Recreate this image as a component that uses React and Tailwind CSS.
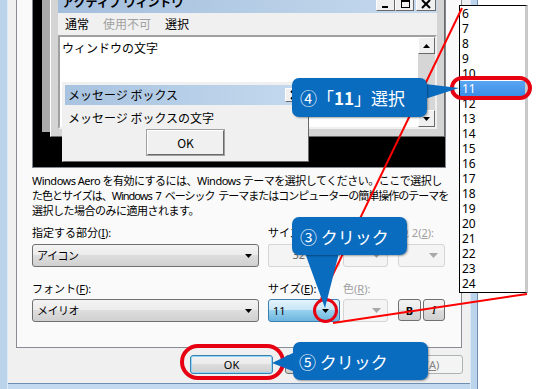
const UI = "font-['Noto_Sans','Noto_Sans_CJK_JP',sans-serif]";

function Tri({ w = 7, h = 4, color = "#000" }) {
  return (
    <svg width={w} height={h} viewBox={`0 0 ${w} ${h}`} className="block shrink-0">
      <path d={`M0 0H${w}L${w / 2} ${h}Z`} fill={color} />
    </svg>
  );
}

function Combo({ className, text, disabled }) {
  return (
    <div
      className={`h-[23px] flex items-center rounded-[3px] border pl-[4px] pr-[6px] ${
        disabled
          ? "border-[#d5d5d5] bg-[#f4f4f4]"
          : "border-[#707070] bg-[linear-gradient(#f3f3f3,#ebebeb_50%,#dddddd_50%,#d0d0d0)]"
      } ${className}`}
    >
      <span className="flex-1 text-[11px] leading-none tracking-[-0.5px]">{text}</span>
      {disabled ? <Tri w={9} h={5} color="#a8a8a8" /> : <Tri />}
    </div>
  );
}

function WinBtn({ children, variant }) {
  const look =
    variant === "default"
      ? "border-[#3c7fb1] shadow-[inset_0_0_0_1px_#8fd6f8] bg-[linear-gradient(#f2f2f2,#ebebeb_50%,#dddddd_50%,#cfcfcf)] text-black"
      : variant === "disabled"
      ? "border-[#adb2b5] bg-[#f4f4f4] text-[#838383]"
      : "border-[#707070] bg-[linear-gradient(#f2f2f2,#ebebeb_50%,#dddddd_50%,#cfcfcf)] text-black";
  return (
    <div className={`w-[83px] h-[19px] rounded-[3px] border flex items-center justify-center text-[11px] leading-none ${look}`}>
      {children}
    </div>
  );
}

function CapBtn({ kind, className = "" }) {
  return (
    <div className={`w-[19px] h-[14px] border border-t-white border-l-white border-r-[#696969] border-b-[#696969] bg-[#f0f0f0] flex items-center justify-center ${className}`}>
      <svg width="14" height="11" viewBox="0 0 14 11">
        {kind === "min" && <rect x="3" y="7" width="6" height="2" fill="#000" />}
        {kind === "max" && (
          <g fill="none" stroke="#000">
            <rect x="3.5" y="1.5" width="8" height="7" />
            <line x1="3" y1="2.5" x2="12" y2="2.5" />
          </g>
        )}
        {kind === "close" && (
          <g stroke="#000" strokeWidth="2">
            <line x1="3" y1="1" x2="11" y2="9" />
            <line x1="11" y1="1" x2="3" y2="9" />
          </g>
        )}
      </svg>
    </div>
  );
}

function ScrollBtn({ up }) {
  return (
    <div className="h-[17px] border border-t-white border-l-white border-r-[#696969] border-b-[#696969] bg-[#f0f0f0] flex items-center justify-center">
      <svg width="7" height="4" viewBox="0 0 7 4" className={up ? "rotate-180" : ""}>
        <path d="M0 0H7L3.5 4Z" fill="#000" />
      </svg>
    </div>
  );
}

function Preview() {
  return (
    <div className="relative w-[414px] h-[168px] shrink-0 overflow-hidden border-x border-b border-[#828790] bg-black text-[12px] font-['Noto_Sans_CJK_JP',sans-serif]">
      <div className="absolute left-[9px] top-[-40px] w-[380px] h-[172px] bg-[#ababab]" />
      <div className="absolute left-[17px] top-[-13px] w-[395px] h-[150px] flex flex-col border border-t-white border-l-white border-r-[#696969] border-b-[#696969] bg-[#d4d4d4] p-[7px]">
        <div className="h-[18px] shrink-0 flex items-start bg-[linear-gradient(to_right,#a3bedc,#c6daee)] pl-[4px] pr-px">
          <span className="flex-1 leading-[14px] font-bold">アクティブ ウィンドウ</span>
          <div className="mt-[2px] flex">
            <CapBtn kind="min" />
            <CapBtn kind="max" />
            <CapBtn kind="close" className="ml-[2px] w-[20px]" />
          </div>
        </div>
        <div className="h-[22px] shrink-0 bg-[#f0f0f0] flex items-center gap-[14px] pl-[7px] leading-none">
          <span>通常</span>
          <span className="text-[#a0a0a0]">使用不可</span>
          <span>選択</span>
        </div>
        <div className="flex-1 flex border-2 border-t-[#a0a0a0] border-l-[#a0a0a0] border-b-[#f0f0f0] border-r-[#f0f0f0] bg-white">
          <div className="flex-1 pl-[2px] pt-[4px] leading-[14px]">ウィンドウの文字</div>
          <div className="w-[17px] flex flex-col justify-between bg-[#d6d6d6]">
            <ScrollBtn up />
            <ScrollBtn />
          </div>
        </div>
      </div>
      <div className="absolute left-[29px] top-[82px] w-[247px] h-[80px] flex flex-col border border-t-[#f0f0f0] border-l-[#f0f0f0] border-r-[#696969] border-b-[#696969] bg-[#f0f0f0] p-[2px]">
        <div className="h-[20px] shrink-0 flex items-center bg-[linear-gradient(to_right,#a8c3e0,#c4d9ee)] pl-[3px] pr-[2px]">
          <span className="flex-1 leading-none">メッセージ ボックス</span>
          <CapBtn kind="close" className="w-[18px]" />
        </div>
        <div className="mt-[6px] pl-[3px] leading-[14px]">メッセージ ボックスの文字</div>
        <div className="mt-[5px] mx-auto w-[77px] h-[25px] flex items-center justify-center border border-t-white border-l-white border-r-[#696969] border-b-[#696969] bg-[#f0f0f0] outline outline-1 outline-[#a0a0a0] leading-none">
          OK
        </div>
      </div>
    </div>
  );
}

const sizes = [6, 7, 8, 9, 10, 11, 12, 13, 14, 15, 16, 17, 18, 19, 20, 21, 22, 23, 24];

export default function App() {
  return (
    <div className={`relative w-[536px] h-[389px] overflow-hidden bg-white text-black ${UI}`}>
      <div className="flex h-full w-[478px]">
        <div className="w-[8px] h-full bg-[#bcd4eb] border-r border-[#dce8f5]" />
        <div className="flex-1 flex flex-col">
          <div className="flex-1 bg-[#f0f0f0] flex flex-col">
            <div className="mx-[8px] h-[348px] border-x border-b border-[#898c95] bg-[#fafafa] pl-[15px] flex flex-col">
              <Preview />
              <div className="mt-[5px] text-[11px] leading-[15px] whitespace-nowrap">
                <div className="tracking-[-0.5px]">Windows Aero を有効にするには、Windows テーマを選択してください。ここで選択し</div>
                <div className="tracking-[-1px] [word-spacing:2px]">た色とサイズは、Windows 7 ベーシック テーマまたはコンピューターの簡単操作のテーマを</div>
                <div className="tracking-[-0.5px]">選択した場合のみに適用されます。</div>
              </div>
              <div className="mt-[8px] flex text-[11px] leading-[14px] whitespace-nowrap">
                <div className="w-[227px]">指定する部分(<u>I</u>):</div>
                <div className="ml-[9px] w-[72px]">サイズ(<u>Z</u>):</div>
                <div className="ml-[3px] w-[45px] text-[#a0a0a0]">色 1(<u>L</u>):</div>
                <div className="ml-[10px] w-[47px] text-[#a0a0a0]">色 2(<u>2</u>):</div>
              </div>
              <div className="mt-[4px] flex">
                <Combo className="w-[227px]" text="アイコン" />
                <div className="ml-[9px] w-[72px] h-[23px] rounded-[2px] border border-[#d5d5d5] bg-[#f4f4f4] flex items-center justify-end pr-[34px] text-[11px] text-[#6d6d6d]">
                  32
                </div>
                <Combo className="ml-[3px] w-[45px]" disabled />
                <Combo className="ml-[10px] w-[47px]" disabled />
              </div>
              <div className="mt-[14px] flex text-[11px] leading-[15px] whitespace-nowrap">
                <div className="w-[227px]">フォント(<u>F</u>):</div>
                <div className="ml-[9px] w-[72px]">サイズ(<u>E</u>):</div>
                <div className="ml-[3px] w-[45px] text-[#a0a0a0]">色(<u>R</u>):</div>
              </div>
              <div className="mt-[3px] flex">
                <Combo className="w-[227px]" text="メイリオ" />
                <div className="ml-[9px] w-[72px] h-[23px] rounded-[3px] border border-[#3c7fb1] bg-[linear-gradient(#e5f4fc,#c4e5f6_50%,#98d1ef_50%,#6cb5dd)] flex items-center pl-[4px] pr-[10px]">
                  <span className="flex-1 text-[11px] leading-none">11</span>
                  <Tri />
                </div>
                <Combo className="ml-[3px] w-[45px]" disabled />
                <div className="ml-[10px] w-[23px] h-[22px] rounded-[3px] border border-[#707070] bg-[linear-gradient(#f2f2f2,#ebebeb_50%,#dddddd_50%,#cfcfcf)] flex items-center justify-center text-[11px] font-bold leading-none">
                  B
                </div>
                <div className="ml-[2px] w-[22px] h-[22px] rounded-[3px] border border-[#707070] bg-[linear-gradient(#f2f2f2,#ebebeb_50%,#dddddd_50%,#cfcfcf)] flex items-center justify-center text-[12px] italic font-['Liberation_Serif',serif] leading-none">
                  I
                </div>
              </div>
            </div>
            <div className="mt-[7px] flex justify-end gap-[12px] pr-[7px]">
              <WinBtn variant="default">OK</WinBtn>
              <WinBtn>キャンセル</WinBtn>
              <WinBtn variant="disabled">
                適用(<u>A</u>)
              </WinBtn>
            </div>
          </div>
          <div className="h-px bg-[#6f8fb2]" />
          <div className="h-[5px] bg-[#c2d9ef]" />
        </div>
        <div className="w-[8px] h-full bg-[#bcd4eb] border-l border-[#dce8f5] border-r border-r-[#6f8fb2]" />
      </div>

      <div className="absolute left-[459px] top-[5px] w-[69px] border border-black border-r-[3px] border-r-[#c9c9c9] bg-white pb-px font-['Noto_Sans',sans-serif] text-[12px]">
        {sizes.map((n) => (
          <div
            key={n}
            className={`h-[15px] leading-[15px] pl-[2px] ${n === 11 ? "bg-[linear-gradient(#5aa6f3,#3b8de6)] text-white" : ""}`}
          >
            {n}
          </div>
        ))}
      </div>

      <svg className="absolute left-0 top-0" width="536" height="389" viewBox="0 0 536 389">
        <line x1="462" y1="8" x2="321" y2="299" stroke="#ff0000" strokeWidth="2" />
        <line x1="527" y1="294" x2="333" y2="323" stroke="#ff0000" strokeWidth="2" />
      </svg>

      <div className="absolute left-[450px] top-[76px] w-[82px] h-[24px] rounded-full border-[4px] border-[#e60012]" />
      <div className="absolute left-[313px] top-[298px] w-[25px] h-[25px] rounded-full border-[3px] border-[#e60012]" />
      <div className="absolute left-[180px] top-[344px] w-[105px] h-[36px] rounded-full border-[4px] border-[#e60012]" />

      <svg className="absolute left-0 top-0" width="536" height="389" viewBox="0 0 536 389">
        <g fill="#0a6cbf">
          <polygon points="425,84 459,88 425,99" />
          <polygon points="305,253 339,253 325,308" />
          <polygon points="295,352 272,363 295,372" />
        </g>
      </svg>

      <div className="absolute left-[292px] top-[78px] w-[135px] h-[39px] rounded-[7px] bg-[#0a6cbf] shadow-[1px_1px_2px_rgba(0,0,0,0.35)] flex items-center pl-[8px] text-white text-[17px] leading-none font-['Noto_Sans_CJK_JP',sans-serif]">
        ④「<b>11</b>」選択
      </div>
      <div className="absolute left-[292px] top-[217px] w-[115px] h-[38px] rounded-[7px] bg-[#0a6cbf] shadow-[1px_1px_2px_rgba(0,0,0,0.35)] flex items-center pl-[8px] text-white text-[17px] leading-none font-['Noto_Sans_CJK_JP',sans-serif]">
        ③ クリック
      </div>
      <div className="absolute left-[293px] top-[342px] w-[135px] h-[38px] rounded-[7px] bg-[#0a6cbf] shadow-[1px_1px_2px_rgba(0,0,0,0.35)] flex items-center pl-[6px] text-white text-[17px] leading-none font-['Noto_Sans_CJK_JP',sans-serif]">
        ⑤ クリック
      </div>
    </div>
  );
}
